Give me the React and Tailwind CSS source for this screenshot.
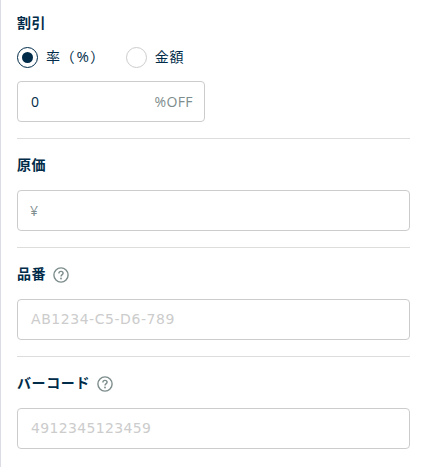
import React from 'react';

const HelpIcon = () => (
  <svg className="w-4 h-4 ml-[7px] mt-[2px] text-[#7d8c8c]" viewBox="0 0 16 16" fill="none" stroke="currentColor">
    <circle cx="8" cy="8" r="7.1" strokeWidth="1.4" />
    <path d="M5.9 6.5C5.9 5.2 6.8 4.4 8 4.4S10.1 5.2 10.1 6.3C10.1 7.6 8 7.8 8 9.5" strokeWidth="1.4" />
    <circle cx="8" cy="11.5" r="0.9" fill="currentColor" stroke="none" />
  </svg>
);

const Title = ({ label, help }) => (
  <div className="flex items-center h-5">
    <h2 className="text-[14px] leading-5 tracking-[0.6px] font-bold whitespace-nowrap">{label}</h2>
    {help && <HelpIcon />}
  </div>
);

const Radio = ({ label, checked, onChange }) => (
  <label className="flex items-center cursor-pointer">
    <input type="radio" name="discount" className="sr-only" checked={checked} onChange={onChange} />
    <span className={`w-[21px] h-[21px] rounded-full border flex items-center justify-center ${checked ? 'border-[#002b49]' : 'border-[#cccccc]'}`}>
      {checked && <span className="w-[11px] h-[11px] rounded-full bg-[#002b49]" />}
    </span>
    <span className="ml-2 mb-[2px] text-[14px] leading-5 tracking-[0.6px] whitespace-nowrap">{label}</span>
  </label>
);

const Field = ({ label, help, children }) => (
  <section className="border-t border-[#dddddb] pt-4 pb-4">
    <Title label={label} help={help} />
    <div className="mt-[15px] h-[41px] flex items-center border border-[#cccccc] rounded px-[13px]">
      {children}
    </div>
  </section>
);

function App() {
  const [type, setType] = React.useState('rate');

  return (
    <div className="h-[467px] overflow-hidden bg-white border-l border-[#dcdce4] pl-4 pr-[15px] text-[#002b49] font-['Open_Sans','Noto_Sans_CJK_JP',sans-serif]">
      <section className="pt-[13px] pb-4">
        <Title label="割引" />
        <div className="mt-[14px] h-[21px] flex items-center gap-[21px]">
          <Radio
            label={<>率（<span className="inline-block w-[15px] text-center text-[15px] tracking-normal">%</span>）</>}
            checked={type === 'rate'}
            onChange={() => setType('rate')}
          />
          <Radio label="金額" checked={type === 'amount'} onChange={() => setType('amount')} />
        </div>
        <div className="mt-[13px] w-[188px] h-[41px] flex items-center border border-[#cccccc] rounded pl-[13px] pr-[11px] text-[14px] tracking-[0.4px]">
          <input className="min-w-0 flex-1 outline-none" defaultValue="0" />
          <span className="mb-px text-[#7d8c8c]">%OFF</span>
        </div>
      </section>

      <Field label="原価">
        <span className="-ml-px mb-px text-[14px] text-[#7d8c8c]">¥</span>
        <input className="min-w-0 flex-1 outline-none text-[14px]" />
      </Field>

      <Field label="品番" help>
        <input
          className="w-full outline-none text-[14px] tracking-[0.55px] font-['DejaVu_Sans',sans-serif] placeholder:text-[#cccccc]"
          placeholder="AB1234-C5-D6-789"
        />
      </Field>

      <Field label="バーコード" help>
        <input
          className="w-full outline-none text-[14px] tracking-[0.35px] font-['DejaVu_Sans',sans-serif] placeholder:text-[#cccccc]"
          placeholder="4912345123459"
        />
      </Field>
    </div>
  );
}

export default App;
